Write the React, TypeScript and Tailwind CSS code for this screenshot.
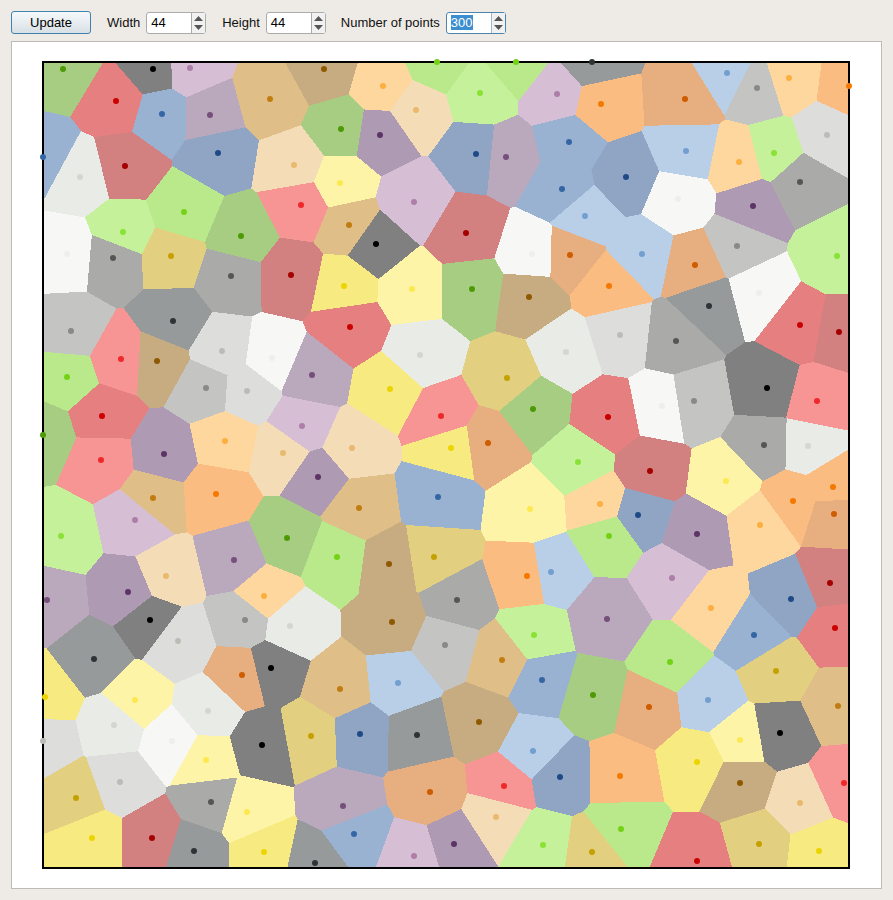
import React from 'react'

type Site = [number, number, string]
type Pt = [number, number]

const sites: Site[] = [
    [63, 69, '4e9a06'], [153, 69, '000000'], [190, 68, 'ad7fa8'], [116, 101, 'cc0000'], [162, 114, '3465a4'],
    [210, 115, '75507b'], [270, 99, 'c17d11'], [218, 153, '204a87'], [294, 165, 'e9b96e'], [43, 157, '3465a4'],
    [80, 177, 'd3d7cf'], [125, 166, 'a40000'], [184, 212, '73d216'], [123, 232, '8ae234'], [241, 236, '4e9a06'],
    [301, 205, 'ef2929'], [67, 254, 'eeeeec'], [113, 258, '555753'], [171, 256, 'c4a000'], [231, 276, '555753'],
    [291, 275, 'a40000'], [71, 331, '888a85'], [173, 321, '2e3436'], [324, 69, '8f5902'], [383, 86, 'fcaf3e'],
    [437, 62, '73d216'], [516, 62, '73d216'], [480, 93, '8ae234'], [416, 110, 'e9b96e'], [557, 94, 'ad7fa8'],
    [341, 129, '4e9a06'], [380, 135, '5c3566'], [476, 154, '204a87'], [506, 157, '75507b'], [569, 142, '3465a4'],
    [562, 189, '3465a4'], [340, 183, 'fce94f'], [414, 202, 'ad7fa8'], [585, 216, '729fcf'], [349, 225, 'c17d11'],
    [376, 244, '000000'], [466, 233, 'a40000'], [532, 254, 'eeeeec'], [570, 255, 'ce5c00'], [344, 286, 'edd400'],
    [412, 289, 'fce94f'], [472, 289, '4e9a06'], [529, 297, '8f5902'], [350, 327, 'cc0000'], [592, 62, '2e3436'],
    [727, 73, '729fcf'], [757, 88, '888a85'], [789, 78, 'fcaf3e'], [849, 86, 'f57900'], [601, 104, 'f57900'],
    [685, 99, 'ce5c00'], [827, 135, 'babdb6'], [686, 151, '729fcf'], [774, 153, '8ae234'], [739, 162, 'fcaf3e'],
    [800, 182, '555753'], [626, 177, '204a87'], [678, 199, 'eeeeec'], [753, 206, '5c3566'], [642, 254, '729fcf'],
    [737, 246, '888a85'], [837, 256, '8ae234'], [695, 265, 'ce5c00'], [609, 286, 'f57900'], [759, 293, 'eeeeec'],
    [709, 306, '2e3436'], [800, 325, 'cc0000'], [839, 332, 'a40000'], [620, 335, 'babdb6'], [676, 341, '555753'],
    [121, 359, 'ef2929'], [157, 361, '8f5902'], [222, 351, 'babdb6'], [272, 358, 'eeeeec'], [312, 375, '75507b'],
    [67, 377, '73d216'], [206, 388, '888a85'], [247, 391, 'babdb6'], [102, 416, 'cc0000'], [302, 426, 'ad7fa8'],
    [43, 435, '4e9a06'], [164, 454, '5c3566'], [225, 441, 'fcaf3e'], [283, 453, 'e9b96e'], [101, 460, 'ef2929'],
    [318, 477, '5c3566'], [153, 498, 'c17d11'], [216, 494, 'f57900'], [135, 520, 'ad7fa8'], [287, 538, '4e9a06'],
    [61, 536, '8ae234'], [234, 560, '75507b'], [166, 576, 'e9b96e'], [128, 592, '5c3566'], [47, 600, '75507b'],
    [264, 596, 'fcaf3e'], [420, 355, 'd3d7cf'], [390, 389, 'edd400'], [507, 378, 'c4a000'], [566, 352, 'd3d7cf'],
    [533, 409, '4e9a06'], [441, 416, 'ef2929'], [488, 443, 'ce5c00'], [451, 448, 'edd400'], [578, 462, '8ae234'],
    [352, 448, 'e9b96e'],
    [438, 497, '3465a4'], [359, 508, 'c17d11'], [530, 509, 'fce94f'], [337, 557, '73d216'], [434, 557, 'c4a000'],
    [389, 564, '8f5902'], [527, 576, 'f57900'], [551, 572, '729fcf'], [457, 600, '555753'], [608, 417, 'cc0000'],
    [662, 406, 'eeeeec'], [694, 401, '888a85'], [767, 388, '000000'], [817, 401, 'ef2929'], [764, 445, '555753'],
    [808, 446, 'd3d7cf'], [650, 471, 'a40000'], [726, 481, 'fce94f'], [600, 504, 'fcaf3e'], [638, 515, '204a87'],
    [793, 501, 'f57900'], [833, 487, 'f57900'], [834, 514, 'ce5c00'], [760, 525, 'fcaf3e'], [697, 534, '5c3566'],
    [609, 536, '73d216'], [830, 583, 'a40000'], [672, 578, 'ad7fa8'], [791, 599, '204a87'], [711, 608, 'fcaf3e'],
    [150, 620, '000000'], [94, 659, '2e3436'], [178, 641, 'babdb6'], [245, 620, '888a85'], [290, 626, 'd3d7cf'],
    [271, 668, '000000'], [242, 675, 'ce5c00'], [45, 697, 'edd400'], [135, 700, 'fce94f'], [208, 711, 'd3d7cf'],
    [114, 725, 'd3d7cf'], [172, 741, 'eeeeec'], [43, 741, 'babdb6'], [262, 745, '000000'], [311, 736, 'c4a000'],
    [206, 760, 'fce94f'], [120, 782, 'babdb6'], [76, 798, 'c4a000'], [211, 802, '555753'], [247, 812, 'fce94f'],
    [92, 838, 'edd400'], [152, 838, 'a40000'], [194, 851, '2e3436'], [264, 852, 'edd400'], [315, 863, '2e3436'],
    [392, 622, '8f5902'], [445, 645, '888a85'], [534, 635, '8ae234'], [502, 660, 'c17d11'], [542, 680, '3465a4'],
    [340, 689, 'c17d11'], [398, 683, '729fcf'], [479, 722, '8f5902'], [360, 734, '204a87'], [417, 735, '2e3436'],
    [533, 751, '729fcf'], [560, 777, '204a87'], [504, 786, 'ef2929'], [430, 792, 'ce5c00'], [343, 806, '75507b'],
    [496, 817, 'e9b96e'], [354, 834, '3465a4'], [454, 844, '5c3566'], [543, 845, '8ae234'], [414, 856, 'ad7fa8'],
    [607, 619, '75507b'], [754, 635, '3465a4'], [835, 628, 'cc0000'], [670, 662, '73d216'], [776, 671, 'c4a000'],
    [593, 695, '4e9a06'], [649, 707, 'ce5c00'], [708, 700, '729fcf'], [838, 706, 'c17d11'], [780, 733, '000000'],
    [740, 740, 'fce94f'], [697, 762, 'edd400'], [620, 776, 'f57900'], [740, 783, '8f5902'], [844, 783, 'ef2929'],
    [800, 803, 'e9b96e'], [621, 829, '73d216'], [592, 852, 'c4a000'], [759, 844, 'c4a000'], [819, 851, 'edd400'],
    [697, 861, 'cc0000'],
]

// half way to white, that is how the cells relate to their dots
const lighten = (hex: string) => {
    const n = parseInt(hex, 16)
    const mix = (c: number) => Math.round((c + 255) / 2)
    return `rgb(${mix((n >> 16) & 255)},${mix((n >> 8) & 255)},${mix(n & 255)})`
}

const clipCell = (site: Site): Pt[] => {
    let poly: Pt[] = [[43, 62], [849, 62], [849, 868], [43, 868]]
    for (const other of sites) {
        if (other === site) continue
        const nx = other[0] - site[0]
        const ny = other[1] - site[1]
        const mx = (other[0] + site[0]) / 2
        const my = (other[1] + site[1]) / 2
        const side = (p: Pt) => (p[0] - mx) * nx + (p[1] - my) * ny
        const next: Pt[] = []
        poly.forEach((p, i) => {
            const q = poly[(i + 1) % poly.length]
            const a = side(p)
            const b = side(q)
            if (a <= 0) next.push(p)
            if ((a < 0 && b > 0) || (a > 0 && b < 0)) {
                const t = a / (a - b)
                next.push([p[0] + (q[0] - p[0]) * t, p[1] + (q[1] - p[1]) * t])
            }
        })
        poly = next
    }
    return poly
}

const Diagram = () => (
    <svg width={810} height={810} viewBox="42 61 810 810" className="block overflow-visible">
        {sites.map((s, i) => (
            <polygon
                key={i}
                points={clipCell(s).map((p) => p.join(',')).join(' ')}
                fill={lighten(s[2])}
                shapeRendering="crispEdges"
            />
        ))}
        <rect x={43} y={62} width={806} height={806} fill="none" stroke="#000" strokeWidth={2} shapeRendering="crispEdges" />
        {sites.map((s, i) => (
            <circle key={i} cx={s[0]} cy={s[1]} r={3} fill={`#${s[2]}`} />
        ))}
    </svg>
)

const Spin = ({ value, focused }: { value: string; focused?: boolean }) => (
    <div
        className={`flex h-[22px] w-[60px] rounded-[3px] border bg-white ${focused ? 'border-[#4b85ad]' : 'border-[#ababab]'}`}
    >
        <div className="flex flex-1 items-center pl-[4px] text-[13px] leading-none text-black">
            {focused ? <span className="bg-[#3b8ecf] py-[1px] text-white">{value}</span> : value}
        </div>
        <div className={`flex w-[14px] flex-col items-center justify-center gap-[4px] border-l bg-[#f1f1f1] ${focused ? 'border-[#9fb9cb]' : 'border-[#ababab]'}`}>
            <svg width="9" height="5" viewBox="0 0 9 5">
                <path d="M4.5 0L9 5H0z" fill="#555" />
            </svg>
            <svg width="9" height="5" viewBox="0 0 9 5">
                <path d="M0 0H9L4.5 5z" fill="#555" />
            </svg>
        </div>
    </div>
)

const Field = ({ label, value, focused }: { label: string; value: string; focused?: boolean }) => (
    <div className="flex items-center gap-[6px]">
        <span className="text-[13px] text-[#111]">{label}</span>
        <Spin value={value} focused={focused} />
    </div>
)

const App = () => (
    <div className="h-[900px] w-[893px] overflow-hidden bg-[#eeebe7] font-['Liberation_Sans',sans-serif]">
        <div className="flex h-[41px] items-center pl-[11px] pt-[4px]">
            <button className="mr-[16px] h-[23px] w-[80px] rounded-[3px] border border-[#3f82ae] bg-gradient-to-b from-[#f6f9fb] to-[#d8e0e5] text-[13px] text-black">
                Update
            </button>
            <div className="mr-[16px]">
                <Field label="Width" value="44" />
            </div>
            <div className="mr-[15px]">
                <Field label="Height" value="44" />
            </div>
            <Field label="Number of points" value="300" focused />
        </div>
        <div className="ml-[11px] h-[848px] w-[871px] border border-[#bdbbb7] bg-white pl-[30px] pt-[19px]">
            <Diagram />
        </div>
    </div>
)

export default App
